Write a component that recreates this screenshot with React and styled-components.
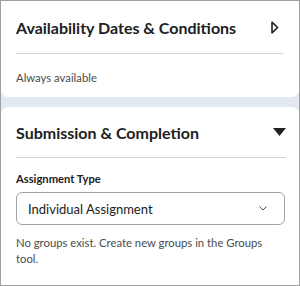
import styled, { createGlobalStyle } from "styled-components";

const GlobalStyle = createGlobalStyle`
  html, body {
    margin: 0;
    padding: 0;
  }
  body {
    font-family: Lato, "Noto Sans", sans-serif;
    color: #202122;
  }
`;

// outer frame with grey border
const Frame = styled.div`
  width: 300px;
  height: 286px;
  box-sizing: border-box;
  border: 1px solid #9ea1a4;
  background-color: #e3e9f1;
  overflow: hidden;
  display: flex;
  flex-direction: column;
  gap: 10px;
`;

const Card = styled.section`
  background-color: #fff;
  border-radius: ${(p) => (p.$top ? "0 0 7px 7px" : "7px 7px 0 0")};
  padding: 0 ${(p) => p.$pr}px 0 15px;
  flex: ${(p) => (p.$grow ? "1" : "none")};
`;

const Header = styled.div`
  display: flex;
  align-items: center;
  justify-content: space-between;
  height: ${(p) => p.$h}px;
  border-bottom: 1px solid #cdd5dc;
`;

const Title = styled.h2`
  margin: 0;
  font-size: 16px;
  font-weight: 700;
  color: #202122;
`;

const IconSlot = styled.span`
  display: flex;
  margin-right: ${(p) => p.$mr || 0}px;
`;

const Muted = styled.p`
  margin: 0;
  font-size: 11.3px;
  line-height: 16px;
  color: #494c4e;
  padding: ${(p) => p.$pad};
`;

const Label = styled.div`
  font-size: 11.2px;
  font-weight: 700;
  color: #202122;
  margin: 14px 0 7px;
`;

const Select = styled.div`
  display: flex;
  align-items: center;
  justify-content: space-between;
  height: 33px;
  box-sizing: border-box;
  border: 1px solid #9ea5ad;
  border-radius: 6px;
  padding: 0 17px 0 11px;
  margin-right: 1px;
  font-size: 13px;
  color: #202122;
`;

const App = () => {
  return (
    <>
      <GlobalStyle />
      <Frame>
        <Card $top $pr={16}>
          <Header $h={52}>
            <Title>Availability Dates &amp; Conditions</Title>
            <IconSlot $mr={4}>
              <svg width="8" height="13" viewBox="0 0 8 13">
                <path
                  d="M1 1.2 L6.6 6.5 L1 11.8 Z"
                  fill="none"
                  stroke="#202122"
                  strokeWidth="1.6"
                  strokeLinejoin="round"
                />
              </svg>
            </IconSlot>
          </Header>
          <Muted $pad="16px 0 11px">Always available</Muted>
        </Card>
        <Card $grow $pr={13}>
          <Header $h={50}>
            <Title>Submission &amp; Completion</Title>
            <IconSlot>
              <svg width="13" height="8" viewBox="0 0 13 8">
                <path d="M0 0 H13 L6.5 8 Z" fill="#202122" />
              </svg>
            </IconSlot>
          </Header>
          <Label>Assignment Type</Label>
          <Select>
            <span>Individual Assignment</span>
            <svg width="8" height="5" viewBox="0 0 8 5">
              <path
                d="M0.8 0.8 L4 4 L7.2 0.8"
                fill="none"
                stroke="#494c4e"
                strokeWidth="1"
                strokeLinecap="round"
                strokeLinejoin="round"
              />
            </svg>
          </Select>
          <Muted $pad="10px 0 0">
            No groups exist. Create new groups in the Groups tool.
          </Muted>
        </Card>
      </Frame>
    </>
  );
};

export default App;
